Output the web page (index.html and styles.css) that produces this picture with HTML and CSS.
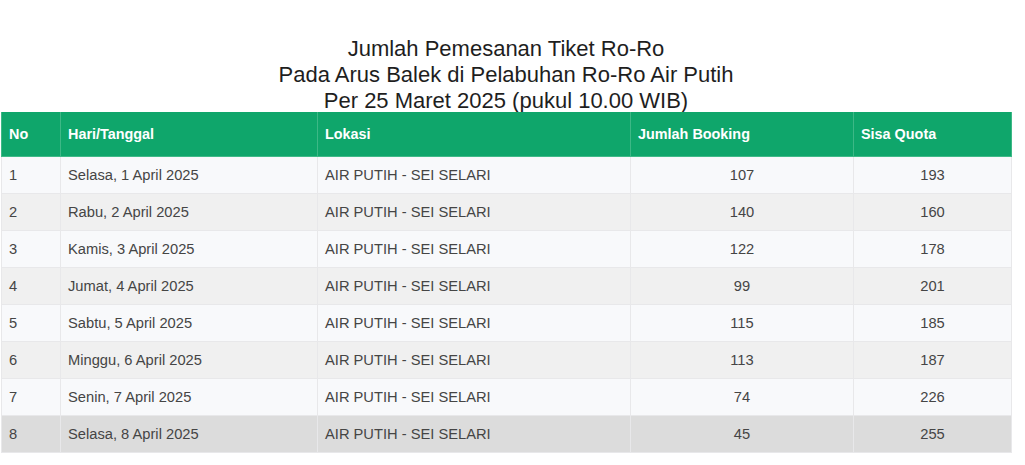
FILE: index.html
```html
<!DOCTYPE html>
<html>
<head>
<meta charset="utf-8">
<link rel="stylesheet" href="styles.css">
</head>
<body>
<div class="page">
  <div class="title">
    <div>Jumlah Pemesanan Tiket Ro-Ro</div>
    <div>Pada Arus Balek di Pelabuhan Ro-Ro Air Putih</div>
    <div>Per 25 Maret 2025 (pukul 10.00 WIB)</div>
  </div>
  <table class="data">
    <colgroup>
      <col class="c-no"><col class="c-day"><col class="c-loc"><col class="c-book"><col class="c-quota">
    </colgroup>
    <thead>
      <tr><th>No</th><th>Hari/Tanggal</th><th>Lokasi</th><th>Jumlah Booking</th><th>Sisa Quota</th></tr>
    </thead>
    <tbody>
      <tr><td>1</td><td>Selasa, 1 April 2025</td><td>AIR PUTIH - SEI SELARI</td><td class="num">107</td><td class="num">193</td></tr>
      <tr><td>2</td><td>Rabu, 2 April 2025</td><td>AIR PUTIH - SEI SELARI</td><td class="num">140</td><td class="num">160</td></tr>
      <tr><td>3</td><td>Kamis, 3 April 2025</td><td>AIR PUTIH - SEI SELARI</td><td class="num">122</td><td class="num">178</td></tr>
      <tr><td>4</td><td>Jumat, 4 April 2025</td><td>AIR PUTIH - SEI SELARI</td><td class="num">99</td><td class="num">201</td></tr>
      <tr><td>5</td><td>Sabtu, 5 April 2025</td><td>AIR PUTIH - SEI SELARI</td><td class="num">115</td><td class="num">185</td></tr>
      <tr><td>6</td><td>Minggu, 6 April 2025</td><td>AIR PUTIH - SEI SELARI</td><td class="num">113</td><td class="num">187</td></tr>
      <tr><td>7</td><td>Senin, 7 April 2025</td><td>AIR PUTIH - SEI SELARI</td><td class="num">74</td><td class="num">226</td></tr>
      <tr class="hl"><td>8</td><td>Selasa, 8 April 2025</td><td>AIR PUTIH - SEI SELARI</td><td class="num">45</td><td class="num">255</td></tr>
    </tbody>
  </table>
</div>
</body>
</html>
```

FILE: styles.css
```css
html, body {
  margin: 0;
  padding: 0;
  background: #ffffff;
}
.page {
  padding: 36px 0 0 1px;
  width: 1010px;
  font-family: "Liberation Sans", Arial, sans-serif;
}
.title {
  text-align: center;
  font-size: 22px;
  line-height: 26px;
  color: #1e1e1e;
  margin-bottom: -2px;
}
.data {
  position: relative;
  width: 1010px;
  border-collapse: collapse;
  table-layout: fixed;
  font-size: 14.7px;
  color: #454545;
}
.c-no { width: 59px; }
.c-day { width: 257px; }
.c-loc { width: 313px; }
.c-book { width: 223px; }
.c-quota { width: 158px; }
.data thead tr {
  background: #0fa66b;
  height: 44px;
}
.data th {
  color: #ffffff;
  font-size: 14.4px;
  font-weight: bold;
  text-align: left;
  padding: 0 7px;
  border-left: 1px solid #3db886;
  border-right: 1px solid #3db886;
  border-bottom: 1px solid #3fba88;
}
.data tbody tr {
  height: 37px;
}
.data td {
  padding: 0 7px;
  border: 1px solid #e8e8ea;
}
.data tbody tr:nth-child(odd) { background: #f8f9fb; }
.data tbody tr:nth-child(even) { background: #f0f0f0; }
.data tbody tr.hl { background: #dcdcdc; }
.data td.num { text-align: center; }
```
